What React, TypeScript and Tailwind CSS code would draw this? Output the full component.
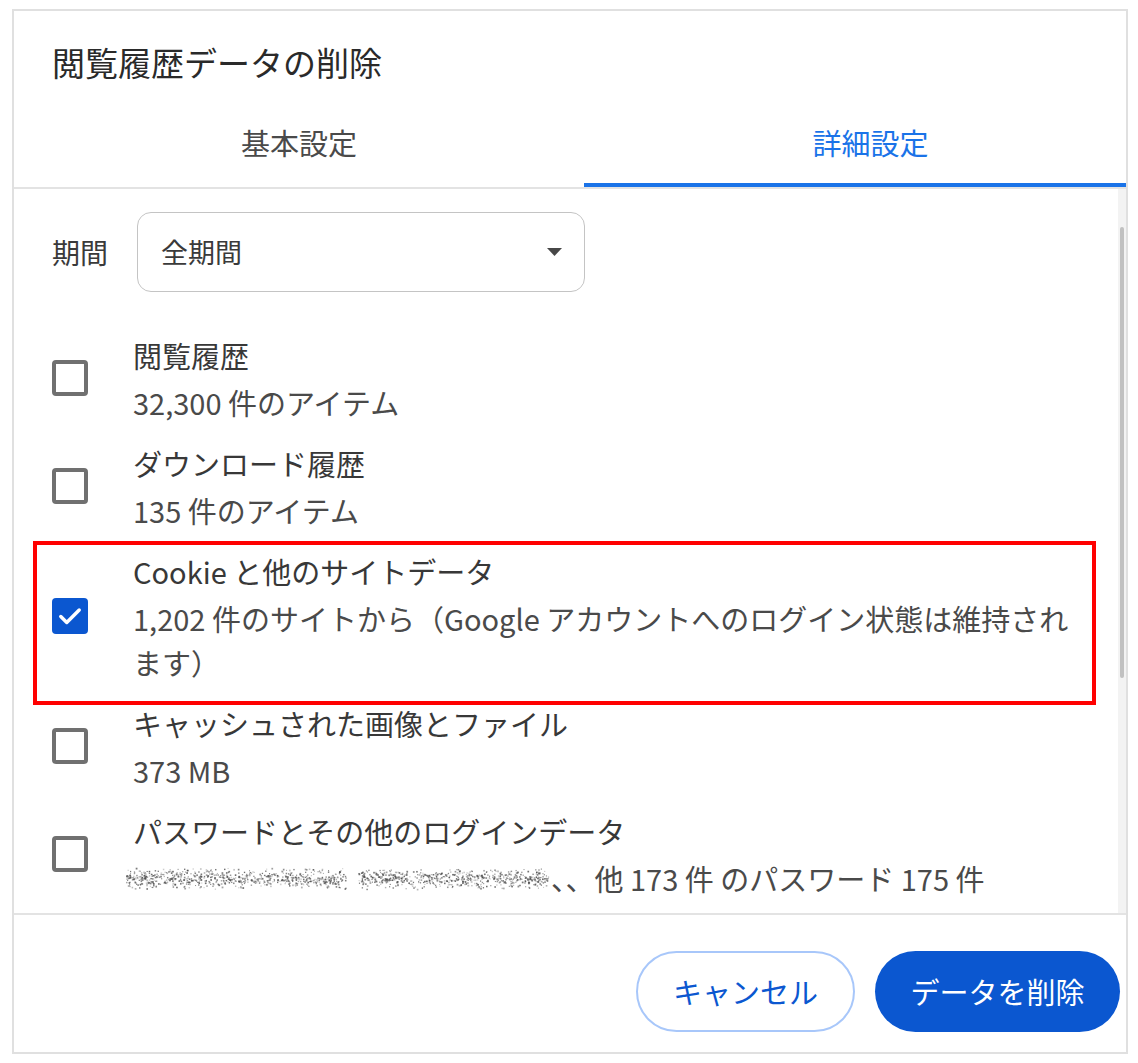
import React from 'react';

// Clear browsing data dialog (advanced tab)

const FONT = "font-['Noto_Sans_CJK_JP','Noto_Sans',sans-serif]";

type Item = {
  title: string;
  sub: React.ReactNode;
  checked?: boolean;
  highlight?: boolean;
};

// deterministic speckle noise for the redacted account names
const makeNoise = (w: number, h: number, n: number, seed: number) => {
  let s = seed;
  const rnd = () => {
    s = (s * 9301 + 49297) % 233280;
    return s / 233280;
  };
  const dots: { x: number; y: number; o: number; r: number }[] = [];
  for (let i = 0; i < n; i++) {
    const x = rnd() * w;
    // denser near the middle rows, like blurred text
    const y = 4 + (rnd() * 0.5 + rnd() * 0.5) * (h - 8);
    dots.push({ x, y, o: 0.25 + rnd() * 0.6, r: 1 + rnd() * 0.8 });
  }
  return dots;
};

const Redacted = () => {
  const left = makeNoise(220, 30, 750, 17);
  const right = makeNoise(190, 30, 650, 91);
  return (
    <svg width="425" height="30" viewBox="0 0 425 30" className="shrink-0">
      {left.map((d, i) => (
        <rect key={'l' + i} x={d.x} y={d.y} width={d.r} height={d.r} fill="#4a4a4a" opacity={d.o} />
      ))}
      {right.map((d, i) => (
        <rect key={'r' + i} x={d.x + 232} y={d.y} width={d.r} height={d.r} fill="#4a4a4a" opacity={d.o} />
      ))}
    </svg>
  );
};

const Checkbox = ({ checked }: { checked?: boolean }) =>
  checked ? (
    <div className="w-[36px] h-[36px] shrink-0 rounded-[4px] bg-[#0b57d0] flex items-center justify-center">
      <svg width="26" height="26" viewBox="0 0 24 24" fill="none">
        <path d="M3.5 12.5l5.5 5.5L20.5 6.5" stroke="white" strokeWidth="3.2" strokeLinecap="round" strokeLinejoin="round" />
      </svg>
    </div>
  ) : (
    <div className="w-[36px] h-[36px] shrink-0 rounded-[4px] border-[4px] border-[#707070]" />
  );

const items: Item[] = [
  { title: '閲覧履歴', sub: '32,300 件のアイテム' },
  { title: 'ダウンロード履歴', sub: '135 件のアイテム' },
  {
    title: 'Cookie と他のサイトデータ',
    sub: (
      <>
        1,202 件のサイトから（Google アカウントへのログイン状態は維持され
        <br />
        ます）
      </>
    ),
    checked: true,
    highlight: true,
  },
  { title: 'キャッシュされた画像とファイル', sub: '373 MB' },
  {
    title: 'パスワードとその他のログインデータ',
    sub: (
      <span className="flex items-center -ml-[7px]">
        <Redacted />
        <span>、、他 173 件 のパスワード 175 件</span>
      </span>
    ),
  },
];

export default function App() {
  return (
    <div className={`w-[1138px] h-[1063px] bg-white pt-[9px] pl-[12px] ${FONT}`}>
      <div className="w-[1116px] h-[1045px] border-2 border-[#e0e0e0] flex flex-col">
        {/* Header */}
        <div className="pt-[31px] pl-[38px] h-[40px] box-content text-[33px] leading-[40px] text-[#2a2a2a]">
          閲覧履歴データの削除
        </div>

        {/* Tabs */}
        <div className="mt-[18px] flex border-b-2 border-[#e3e3e3]">
          <div className="w-[570px] h-[87px] pt-[3px] border-b-[4px] border-transparent flex items-center justify-center text-[29px] text-[#4a4a4a]">
            基本設定
          </div>
          <div className="flex-1 h-[87px] pt-[3px] pl-[31px] border-b-[4px] border-[#1a73e8] flex items-center justify-center text-[29px] text-[#1a73e8]">
            詳細設定
          </div>
        </div>

        {/* Scroll area */}
        <div className="h-[724px] flex overflow-hidden">
          <div className="flex-1 pt-[23px]">
            <div className="flex items-center pl-[38px]">
              <span className="w-[85px] text-[28px] text-[#3a3a3a]">期間</span>
              <div className="w-[448px] h-[80px] rounded-[14px] border border-[#c4c4c4] flex items-center justify-between pl-[23px] pr-[22px]">
                <span className="text-[27px] text-[#3a3a3a]">全期間</span>
                <svg width="15" height="8" viewBox="0 0 15 8">
                  <polygon points="0,0 15,0 7.5,8" fill="#474747" />
                </svg>
              </div>
            </div>

            <div className="mt-[32px]">
              {items.map((item, i) => (
                <div key={i} className="relative flex items-center py-[8px] pl-[38px]">
                  <Checkbox checked={item.checked} />
                  <div className="ml-[45px] text-[29px]">
                    <div className="leading-[46px] text-[#383838] whitespace-nowrap">{item.title}</div>
                    <div className="mt-[2px] leading-[44px] text-[#4a4a4a] whitespace-nowrap">{item.sub}</div>
                  </div>
                  {item.highlight && (
                    <div className="absolute top-[1px] left-[19px] w-[1063px] h-[164px] border-[4px] border-[#ff0000]" />
                  )}
                </div>
              ))}
            </div>
          </div>

          {/* Scrollbar */}
          <div className="w-[8px] bg-[#f3f3f3] pt-[38px] flex justify-center">
            <div className="w-[4px] h-[451px] rounded-full bg-[#c1c1c1]" />
          </div>
        </div>

        {/* Footer */}
        <div className="border-t-2 border-[#e3e3e3] pt-[36px] pr-[6px] flex justify-end gap-[20px]">
          <button className="w-[219px] h-[81px] rounded-full border-2 border-[#a8c7fa] text-[29px] text-[#0b57d0] bg-white">
            キャンセル
          </button>
          <button className="w-[245px] h-[81px] rounded-full bg-[#0b57d0] text-[29px] text-white">
            データを削除
          </button>
        </div>
      </div>
    </div>
  );
}
